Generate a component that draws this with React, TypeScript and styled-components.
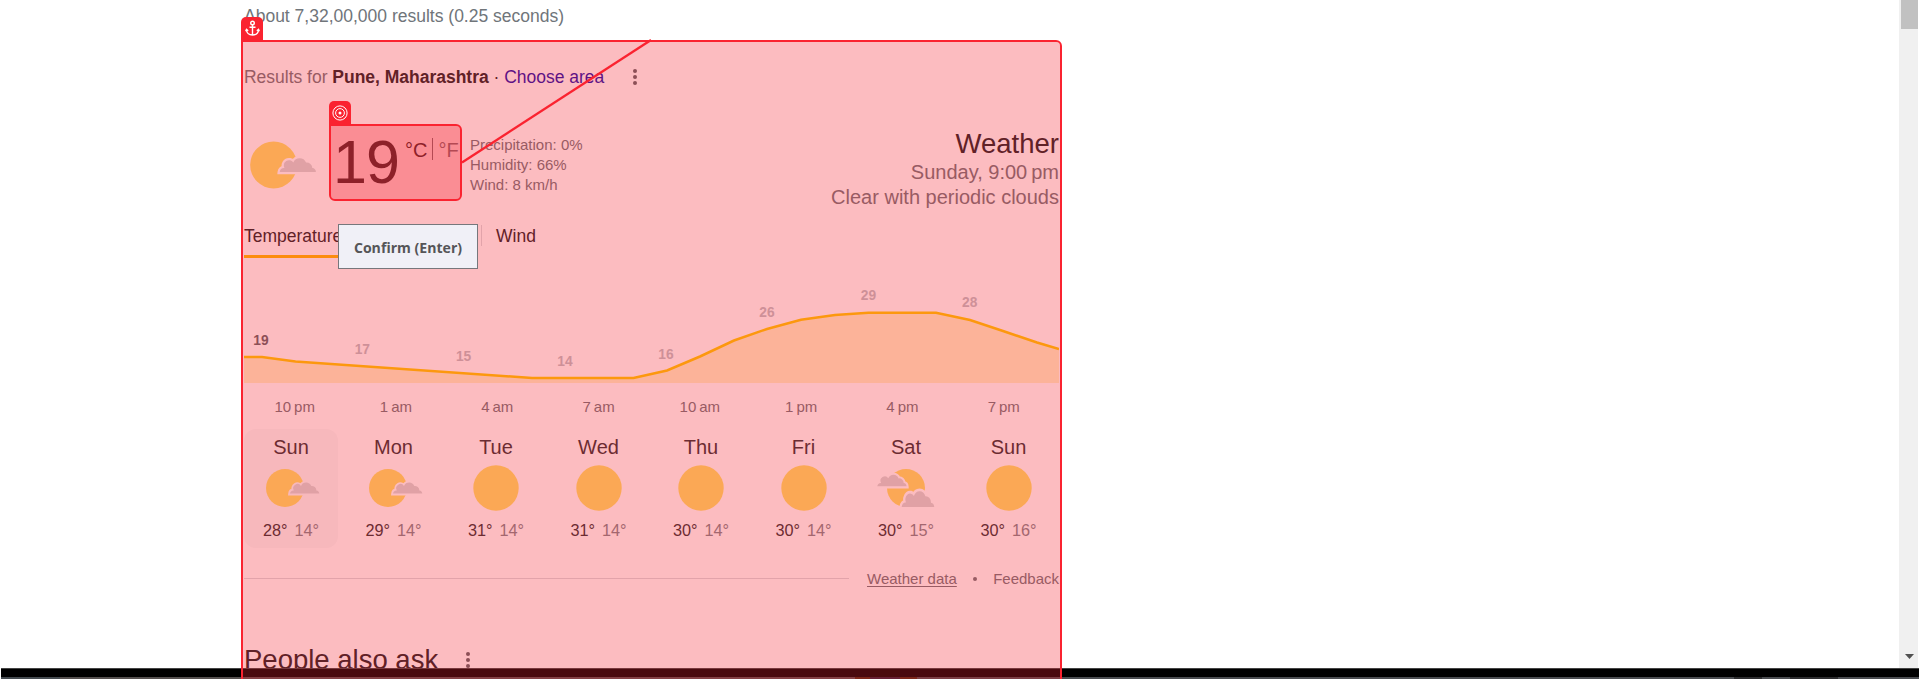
import React from "react";
import styled, { createGlobalStyle } from "styled-components";

const Global = createGlobalStyle`
  *{box-sizing:border-box}
  html,body{margin:0;padding:0;background:#fff;overflow:hidden}
  body{font-family:"Liberation Sans",Arial,sans-serif;color:#202124}
`;

const Screen = styled.div`
  position: relative;
  width: 1920px;
  height: 679px;
  overflow: hidden;
  display: flex;
  flex-direction: column;
`;
const Viewport = styled.div`
  display: flex;
  justify-content: space-between;
  height: 668px;
  padding-right: 2px;
  overflow: hidden;
`;
const Column = styled.main`
  width: 815px;
  margin-left: 244px;
  flex: none;
`;
const Stats = styled.div`
  height: 32px;
  font-size: 17.5px;
  line-height: 32px;
  color: #70757a;
  white-space: nowrap;
`;
const AreaRow = styled.div`
  display: flex;
  align-items: center;
  height: 24px;
  margin-top: 33px;
  font-size: 17.5px;
  letter-spacing: -0.015px;
  color: #70757a;
  white-space: pre;
  b, span { color: #202124; }
`;
const AreaLink = styled.a`
  color: #1a0dab;
`;
const Dots = styled.span<{ $gap: number }>`
  display: flex;
  flex-direction: column;
  gap: 2px;
  margin-left: ${(p) => p.$gap}px;
  i { width: 4px; height: 4px; border-radius: 50%; background: #5f6368; }
`;
const Current = styled.section`
  display: flex;
  height: 96px;
  margin-top: 36px;
`;
const CurrentIcon = styled.div`
  width: 80px;
  padding-top: 3px;
  svg { display: block; }
`;
const Degrees = styled.div`
  width: 81px;
  padding-left: 9px;
  font-size: 61px;
  line-height: 74px;
  letter-spacing: -1px;
`;
const Units = styled.div`
  display: flex;
  width: 65px;
  padding-top: 13px;
  font-size: 20px;
  line-height: 24px;
`;
const Unit = styled.span<{ $muted?: boolean }>`
  color: ${(p) => (p.$muted ? "#70757a" : "#202124")};
  & + & {
    height: 22px;
    margin-left: 5px;
    padding-left: 5px;
    border-left: 1px solid #70757a;
  }
`;
const Details = styled.div`
  padding-top: 10px;
  font-size: 15px;
  line-height: 20px;
  color: #70757a;
`;
const Heading = styled.div`
  margin-left: auto;
  text-align: right;
  font-size: 20px;
  line-height: 25px;
  color: #70757a;
`;
const Title = styled.div`
  padding-top: 2px;
  font-size: 27.5px;
  line-height: 33px;
  color: #202124;
`;
const Tabs = styled.nav`
  display: flex;
  height: 38px;
  margin-top: -1px;
  font-size: 17.5px;
  line-height: 32px;
`;
const Tab = styled.div<{ $active?: boolean; $width?: number }>`
  width: ${(p) => (p.$width ? p.$width + "px" : "auto")};
  border-bottom: ${(p) => (p.$active ? "3px solid #fb0" : "0")};
`;
const TabRule = styled.div`
  width: 1px;
  height: 21px;
  margin: 5px 14px 0 0;
  background: #dadce0;
`;
const Chart = styled.svg`
  display: block;
  width: 815px;
  height: 123px;
  margin-top: 2px;
  font: bold 13.75px "Liberation Sans", Arial, sans-serif;
`;
const Hours = styled.div`
  display: flex;
  height: 46px;
  padding-top: 13px;
  font-size: 15px;
  line-height: 22px;
  color: #70757a;
  span { width: 101.3px; flex: none; text-align: center; }
`;
const Days = styled.div`
  display: flex;
  gap: 8.5px;
`;
const Day = styled.div<{ $selected?: boolean }>`
  display: flex;
  flex-direction: column;
  align-items: center;
  width: 94px;
  height: 119px;
  flex: none;
  border-radius: 12px;
  background: ${(p) => (p.$selected ? "#f8f9fa" : "transparent")};
  color: #303134;
`;
const DayName = styled.div`
  height: 29px;
  font-size: 20px;
  line-height: 36px;
`;
const DayTemps = styled.div`
  display: flex;
  gap: 7px;
  font-size: 16.25px;
  line-height: 24px;
  span { color: #80868b; }
`;
const Footer = styled.div`
  display: flex;
  align-items: center;
  height: 24px;
  margin-top: 18px;
  font-size: 15px;
  color: #70757a;
  white-space: nowrap;
  hr { width: 605px; flex: none; margin: 0 18px 0 0; border: 0; border-top: 1px solid #dadce0; }
  u { text-underline-offset: 2px; }
`;
const Bullet = styled.i`
  width: 4px;
  height: 4px;
  margin: 2px auto 0;
  border-radius: 50%;
  background: #70757a;
`;
const Ask = styled.h2`
  display: flex;
  align-items: center;
  margin: 38px 0 0;
  font-size: 27.5px;
  font-weight: 400;
  line-height: 64px;
`;
const Scrollbar = styled.div`
  display: flex;
  flex-direction: column;
  justify-content: space-between;
  align-items: center;
  width: 19px;
  height: 668px;
  padding: 0 0 9px 2px;
  background: #f0f0f0;
`;
const Thumb = styled.div`
  width: 17px;
  height: 29px;
  background: #c1c1c1;
`;
const Taskbar = styled.div`
  display: flex;
  align-items: flex-end;
  height: 11px;
  margin: 0 1px;
  border-top: 1px solid #444;
  background: #000;
`;
const Strip = styled.div<{ $width?: number; $color: string }>`
  width: ${(p) => (p.$width ? p.$width + "px" : "auto")};
  flex: ${(p) => (p.$width ? "none" : "1")};
  height: 2px;
  background: ${(p) => p.$color};
`;
const Selection = styled.div`
  position: absolute;
  left: 241px;
  top: 40px;
  width: 821px;
  height: 660px;
  border: 2px solid #fa2330;
  border-radius: 0 6px 0 0;
  background: rgba(246, 34, 46, 0.3);
  background-clip: padding-box;
`;
const Target = styled.div`
  position: absolute;
  left: 329px;
  top: 124px;
  width: 133px;
  height: 77px;
  border: 2px solid #fa2330;
  border-radius: 0 6px 6px 6px;
  background: rgba(246, 34, 46, 0.3);
  background-clip: padding-box;
`;
const Badge = styled.div<{ $x: number; $y: number }>`
  position: absolute;
  left: ${(p) => p.$x}px;
  top: ${(p) => p.$y}px;
  display: flex;
  align-items: center;
  justify-content: center;
  width: 22px;
  height: 23px;
  border-radius: 5px 5px 0 0;
  background: #fa2330;
`;
const Connector = styled.svg`
  position: absolute;
  left: 0;
  top: 0;
`;
const Confirm = styled.button`
  position: absolute;
  left: 338px;
  top: 224px;
  width: 140px;
  height: 45px;
  padding: 1px 0 0;
  border: 1px solid #76777c;
  background: #f0f0f7;
  color: #555558;
  font: bold 14.1px "Open Sans", "Noto Sans", sans-serif;
`;

const SUN = "#fee366";
const CLOUD = "#d7d9d9";
const cloudPath =
  "M0 11.3 C.2 9.2 1.7 7.9 3.8 8.1 A4.25 4.25 0 0 1 11 3.6 A5.6 5.6 0 0 1 21.3 3.7 A4.6 4.6 0 0 1 26.4 8.2 C28.2 8.3 29.2 9.6 29.3 11.3Z";

const PartlyCloudy = ({ size, bg }: { size: number; bg: string }) => (
  <svg width={size} height={size} viewBox="0 0 60 60">
    <circle cx="24" cy="30" r="19" fill={SUN} />
    <path d={cloudPath} transform="translate(29 24.3)" fill={bg} stroke={bg} strokeWidth="3.6" />
    <path d={cloudPath} transform="translate(29 24.3)" fill={CLOUD} />
  </svg>
);
const Clear = () => (
  <svg width="60" height="60" viewBox="0 0 60 60">
    <circle cx="30" cy="30" r="22.7" fill={SUN} />
  </svg>
);
const MostlyCloudy = () => (
  <svg width="60" height="60" viewBox="0 0 60 60">
    <circle cx="30" cy="30" r="19" fill={SUN} />
    <g fill="#fff" stroke="#fff" strokeWidth="4">
      <path d={cloudPath} transform="translate(1.3 16.5) scale(1 1.05)" />
      <path d={cloudPath} transform="translate(25.7 33) scale(1.11 1.42)" />
    </g>
    <g fill={CLOUD}>
      <path d={cloudPath} transform="translate(1.3 16.5) scale(1 1.05)" />
      <path d={cloudPath} transform="translate(25.7 33) scale(1.11 1.42)" />
    </g>
  </svg>
);

const readings: [number, number, number][] = [
  [19, 17, 73], [17, 118.3, 82], [15, 219.6, 89], [14, 321, 94],
  [16, 422, 87], [26, 523, 45], [29, 624.5, 28], [28, 725.7, 35],
];
const line =
  "0,47 18,47 51.5,51.5 288,68 389.5,68 423,60.5 456,46.5 490,30.5 523,19 557,9.7 591,5 624.5,2.8 692,2.8 726,10 759,21 793,32.5 815,39";
const hours = ["10\u202Fpm", "1\u202Fam", "4\u202Fam", "7\u202Fam", "10\u202Fam", "1\u202Fpm", "4\u202Fpm", "7\u202Fpm"];
const days = [
  { name: "Sun", hi: 28, lo: 14, sky: "partly" },
  { name: "Mon", hi: 29, lo: 14, sky: "partly" },
  { name: "Tue", hi: 31, lo: 14, sky: "clear" },
  { name: "Wed", hi: 31, lo: 14, sky: "clear" },
  { name: "Thu", hi: 30, lo: 14, sky: "clear" },
  { name: "Fri", hi: 30, lo: 14, sky: "clear" },
  { name: "Sat", hi: 30, lo: 15, sky: "mostly" },
  { name: "Sun", hi: 30, lo: 16, sky: "clear" },
];

export default function App() {
  return (
    <Screen>
      <Global />
      <Viewport>
        <Column>
          <Stats>About 7,32,00,000 results (0.25 seconds)</Stats>
          <AreaRow>
            Results for <b>Pune, Maharashtra</b><span> · </span>
            <AreaLink>Choose area</AreaLink>
            <Dots $gap={29}><i /><i /><i /></Dots>
          </AreaRow>
          <Current>
            <CurrentIcon><PartlyCloudy size={74} bg="#fff" /></CurrentIcon>
            <Degrees>19</Degrees>
            <Units><Unit>°C</Unit><Unit $muted>°F</Unit></Units>
            <Details>
              <div>Precipitation: 0%</div>
              <div>Humidity: 66%</div>
              <div>Wind: 8 km/h</div>
            </Details>
            <Heading>
              <Title>Weather</Title>
              <div>Sunday, 9:00{"\u202F"}pm</div>
              <div>Clear with periodic clouds</div>
            </Heading>
          </Current>
          <Tabs>
            <Tab $active $width={98}>Temperature</Tab>
            <Tab $width={139} />
            <TabRule />
            <Tab>Wind</Tab>
          </Tabs>
          <Chart viewBox="0 -50 815 123">
            <polygon points={`0,73 ${line} 815,73`} fill="#fff3c8" />
            <polyline points={line} fill="none" stroke="#fc0" strokeWidth="2.5" />
            {readings.map(([t, x, y], i) => (
              <text key={t} x={x} y={y - 38} textAnchor="middle" fill={i ? "#bdc1c6" : "#5f6368"}>{t}</text>
            ))}
          </Chart>
          <Hours>{hours.map((h) => <span key={h}>{h}</span>)}</Hours>
          <Days>
            {days.map((d, i) => (
              <Day key={i} $selected={i === 0}>
                <DayName>{d.name}</DayName>
                {d.sky === "partly" ? <PartlyCloudy size={60} bg={i ? "#fff" : "#f8f9fa"} /> : d.sky === "clear" ? <Clear /> : <MostlyCloudy />}
                <DayTemps>{d.hi}°<span>{d.lo}°</span></DayTemps>
              </Day>
            ))}
          </Days>
          <Footer>
            <hr /><u>Weather data</u><Bullet /><div>Feedback</div>
          </Footer>
          <Ask>People also ask<Dots $gap={28}><i /><i /><i /></Dots></Ask>
        </Column>
        <Scrollbar>
          <Thumb />
          <svg width="9" height="5" viewBox="0 0 9 5"><path d="M0 0H9L4.5 5Z" fill="#505050" /></svg>
        </Scrollbar>
      </Viewport>
      <Taskbar>
        <Strip $width={59} $color="#454b50" />
        <Strip $width={795} $color="#55504f" />
        <Strip $width={15} $color="#4a2a12" />
        <Strip $width={30} $color="#2a2038" />
        <Strip $width={17} $color="#4a2a12" />
        <Strip $width={817} $color="#4a4c50" />
        <Strip $width={28} $color="#2c2c2e" />
        <Strip $width={28} $color="#4a4c50" />
        <Strip $width={48} $color="#2c2c2e" />
        <Strip $color="#4a4c50" />
      </Taskbar>
      <Selection />
      <Target />
      <Connector width="1920" height="679">
        <path d="M462 162.5 651 40" stroke="#fa2330" strokeWidth="2.3" fill="none" />
      </Connector>
      <Badge $x={241} $y={17}>
        <svg width="15" height="17" viewBox="0 0 15 17" fill="none" stroke="#fff" strokeWidth="1.4">
          <circle cx="7.5" cy="3" r="1.8" />
          <path d="M7.5 5V15M4.5 7.2H10.5M1.3 9.5C1.7 13 4 15 7.5 15S13.3 13 13.7 9.5M.7 11.3 1.5 9.3 3.2 10.7M14.3 11.3 13.5 9.3 11.8 10.7" />
        </svg>
      </Badge>
      <Badge $x={329} $y={101}>
        <svg width="16" height="16" viewBox="0 0 16 16" fill="none" stroke="#fff">
          <circle cx="8" cy="8" r="7.1" /><circle cx="8" cy="8" r="4.4" /><circle cx="8" cy="8" r="1.5" fill="#fff" stroke="none" />
        </svg>
      </Badge>
      <Confirm>Confirm (Enter)</Confirm>
    </Screen>
  );
}
